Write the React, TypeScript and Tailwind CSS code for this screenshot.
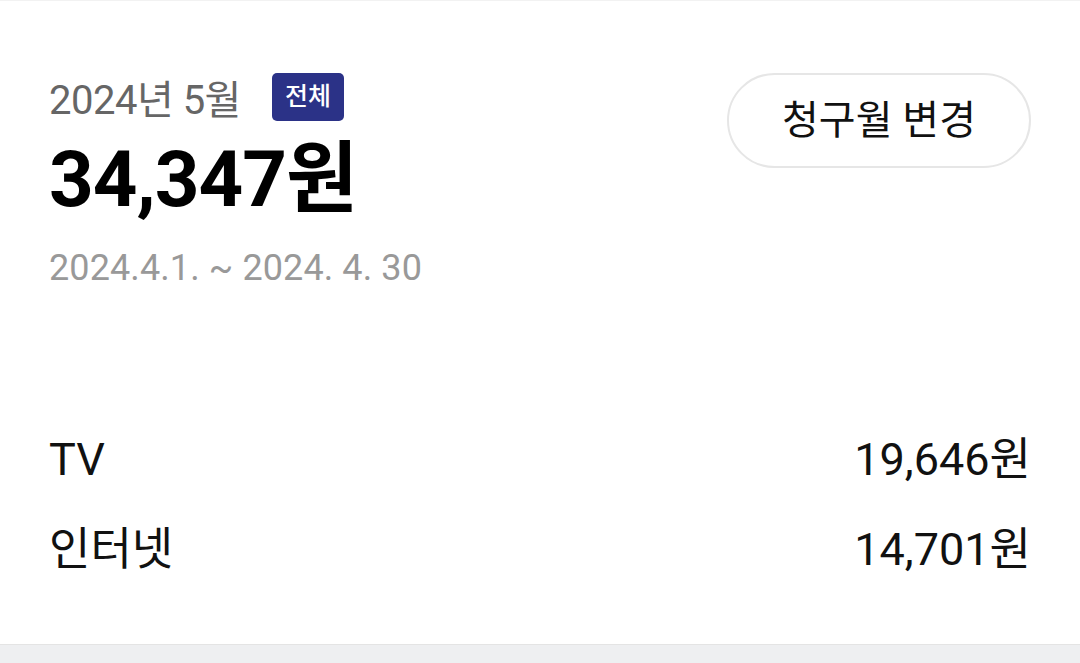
export default function App() {
  return (
    <div
      className="w-[1080px] h-[663px] bg-white flex flex-col overflow-hidden"
      style={{ fontFamily: 'Roboto, "Noto Sans CJK KR", sans-serif' }}
    >
      <div className="h-px bg-[#f2f2f2]" />
      <section className="flex-1 px-[49px] pt-[72px]">
        <div className="flex justify-between items-start">
          <div>
            <div className="flex items-start h-[52px]">
              <span className="mt-[8px] text-[40px] leading-none text-[#666666] tracking-[-0.5px]">2024년 5월</span>
              <span className="ml-[31px] h-[48px] w-[72px] rounded-[5px] bg-[#2b3287] text-white text-[25px] font-medium flex items-center justify-center">
                전체
              </span>
            </div>
            <div className="mt-[16px] text-[78px] leading-none font-bold text-black tracking-[-1px]">34,347원</div>
            <div className="mt-[31px] text-[36px] leading-none text-[#999999] tracking-[0.1px]">2024.4.1. ~ 2024. 4. 30</div>
          </div>
          <button className="w-[304px] h-[95px] rounded-full border-2 border-[#e6e6e6] text-[40px] text-[#111111] flex items-center justify-center">
            청구월 변경
          </button>
        </div>
        <div className="mt-[151px] flex flex-col gap-[45px]">
          <div className="flex justify-between items-center text-[45px] leading-none text-[#111111]">
            <span>TV</span>
            <span>19,646원</span>
          </div>
          <div className="flex justify-between items-center text-[45px] leading-none text-[#111111]">
            <span>인터넷</span>
            <span>14,701원</span>
          </div>
        </div>
      </section>
      <div className="h-[19px] bg-[#eeeff1] border-t border-[#e4e4e4]" />
    </div>
  );
}
